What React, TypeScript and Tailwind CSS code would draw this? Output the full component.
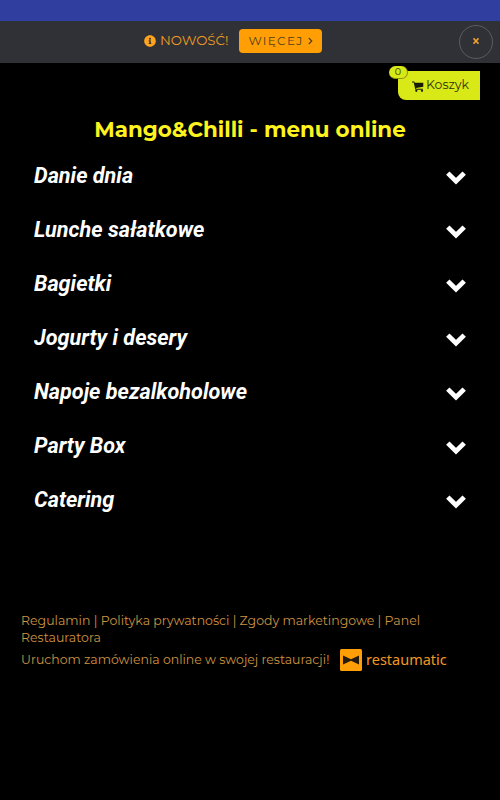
import React from "react";
import { FaInfoCircle } from "react-icons/fa";

const categories = [
  "Danie dnia",
  "Lunche sałatkowe",
  "Bagietki",
  "Jogurty i desery",
  "Napoje bezalkoholowe",
  "Party Box",
  "Catering",
];

function ChevronDown() {
  return (
    <svg className="mt-[3px] h-[14px] w-5" viewBox="0 0 20 14" fill="none" stroke="#fff" strokeWidth="4.8">
      <path d="M1.8 2.1 10 10.2 18.2 2.1" />
    </svg>
  );
}

function Cart() {
  return (
    <svg className="mt-[1px] h-[11px] w-[12px] shrink-0" viewBox="0 0 12 11" fill="#171a04">
      <path d="M0 .5h2.3l.4 1.2h8.6v4L4 6.9l.2.9h6.7v1H3.4L1.7 1.5H0Z" />
      <circle cx="4.3" cy="9.8" r="1.1" />
      <circle cx="10" cy="9.8" r="1.1" />
    </svg>
  );
}

function NoticeBar() {
  return (
    <div className="flex h-[42px] items-center bg-[#303137] pr-[7px] pl-[144px] text-[#ee9c20]">
      <FaInfoCircle className="-mt-[3px] h-[12px] w-[12px] shrink-0 text-[#ffa41c]" />
      <span className="-mt-[4px] ml-[4px] w-[79px] origin-left scale-x-[.985] text-[13.5px] leading-4 whitespace-nowrap">NOWOŚĆ!</span>
      <button className="-mt-[2px] flex h-6 w-[83px] items-center justify-center rounded-[4px] bg-[#ff9f05] text-[12px] tracking-[1.3px] text-[#51401c]">
        WIĘCEJ
        <svg className="ml-[4px] h-2 w-[5px]" viewBox="0 0 5 8" fill="none" stroke="currentColor" strokeWidth="1.2">
          <path d="m.8 1 3 3-3 3" />
        </svg>
      </button>
      <button className="-mt-px ml-auto flex h-[34px] w-[34px] items-center justify-center rounded-full border border-[#5b5c61]">
        <svg className="-mt-px h-[6px] w-[6px]" viewBox="0 0 6 6" stroke="#efa02c" strokeWidth="1.6">
          <path d="m.5.3 5 5.4m0-5.4-5 5.4" />
        </svg>
      </button>
    </div>
  );
}

function Basket() {
  return (
    <div className="flex h-[37px] justify-end pt-2 pr-5">
      <button className="relative flex h-[29px] w-[82px] items-center rounded-bl-[8px] bg-[#d9e817] pl-[14px] text-[13px] text-[#2d3008]">
        <span className="absolute top-[-5px] left-[-9px] flex h-[13px] w-[19px] items-center justify-center rounded-full border-r border-b border-[#899411] bg-[#d9e817] text-[9.5px]">0</span>
        <Cart />
        <span className="-mt-0.5 ml-[2px] origin-left scale-x-[.96]">Koszyk</span>
      </button>
    </div>
  );
}

export default function App() {
  return (
    <div className="h-[800px] w-[500px] overflow-hidden bg-black font-['Montserrat','Inter',sans-serif]">
      <div className="h-[21px] bg-[#303f9f]" />
      <NoticeBar />
      <Basket />
      <h1 className="mt-[16px] scale-x-[.974] text-center text-[22px] leading-7 font-bold whitespace-nowrap text-[#fff31e]">
        Mango&amp;Chilli - menu online
      </h1>
      <main className="mt-[5px] pr-[34px] pl-[34px]">
        {categories.map((name) => (
          <div key={name} className="flex h-[54px] items-center justify-between">
            <h2 className="-mt-[2px] origin-left scale-x-[.961] font-[Roboto,sans-serif] text-[22.5px] leading-none font-bold whitespace-nowrap text-white italic">{name}</h2>
            <ChevronDown />
          </div>
        ))}
      </main>
      <footer className="mt-[85px] pl-[21px] text-[13px] leading-[17px] text-[#ce9442]">
        <p className="origin-left scale-x-[.962] whitespace-nowrap">
          <a>Regulamin</a> | <a>Polityka prywatności</a> | <a>Zgody marketingowe</a> | <a>Panel</a>
          <br />
          <a>Restauratora</a>
        </p>
        <div className="mt-[3px] flex items-center whitespace-nowrap">
          <div className="-mt-[2px] w-[319px] shrink-0">
            <span className="inline-block origin-left scale-x-[.96]">Uruchom zamówienia online w swojej restauracji!</span>
          </div>
          <svg className="h-[22px] w-[22px] shrink-0" viewBox="0 0 22 22">
            <rect width="22" height="22" rx="1.5" fill="#ff9f05" />
            <path d="M3 6.5 11 10.3 19 6.5v9L11 11.7 3 15.5Z" fill="#241a0d" />
          </svg>
          <span className="-mt-[2px] ml-[4px] font-['Noto_Sans',sans-serif] text-[14.5px] text-[#f09a21]">restaumatic</span>
        </div>
      </footer>
    </div>
  );
}
